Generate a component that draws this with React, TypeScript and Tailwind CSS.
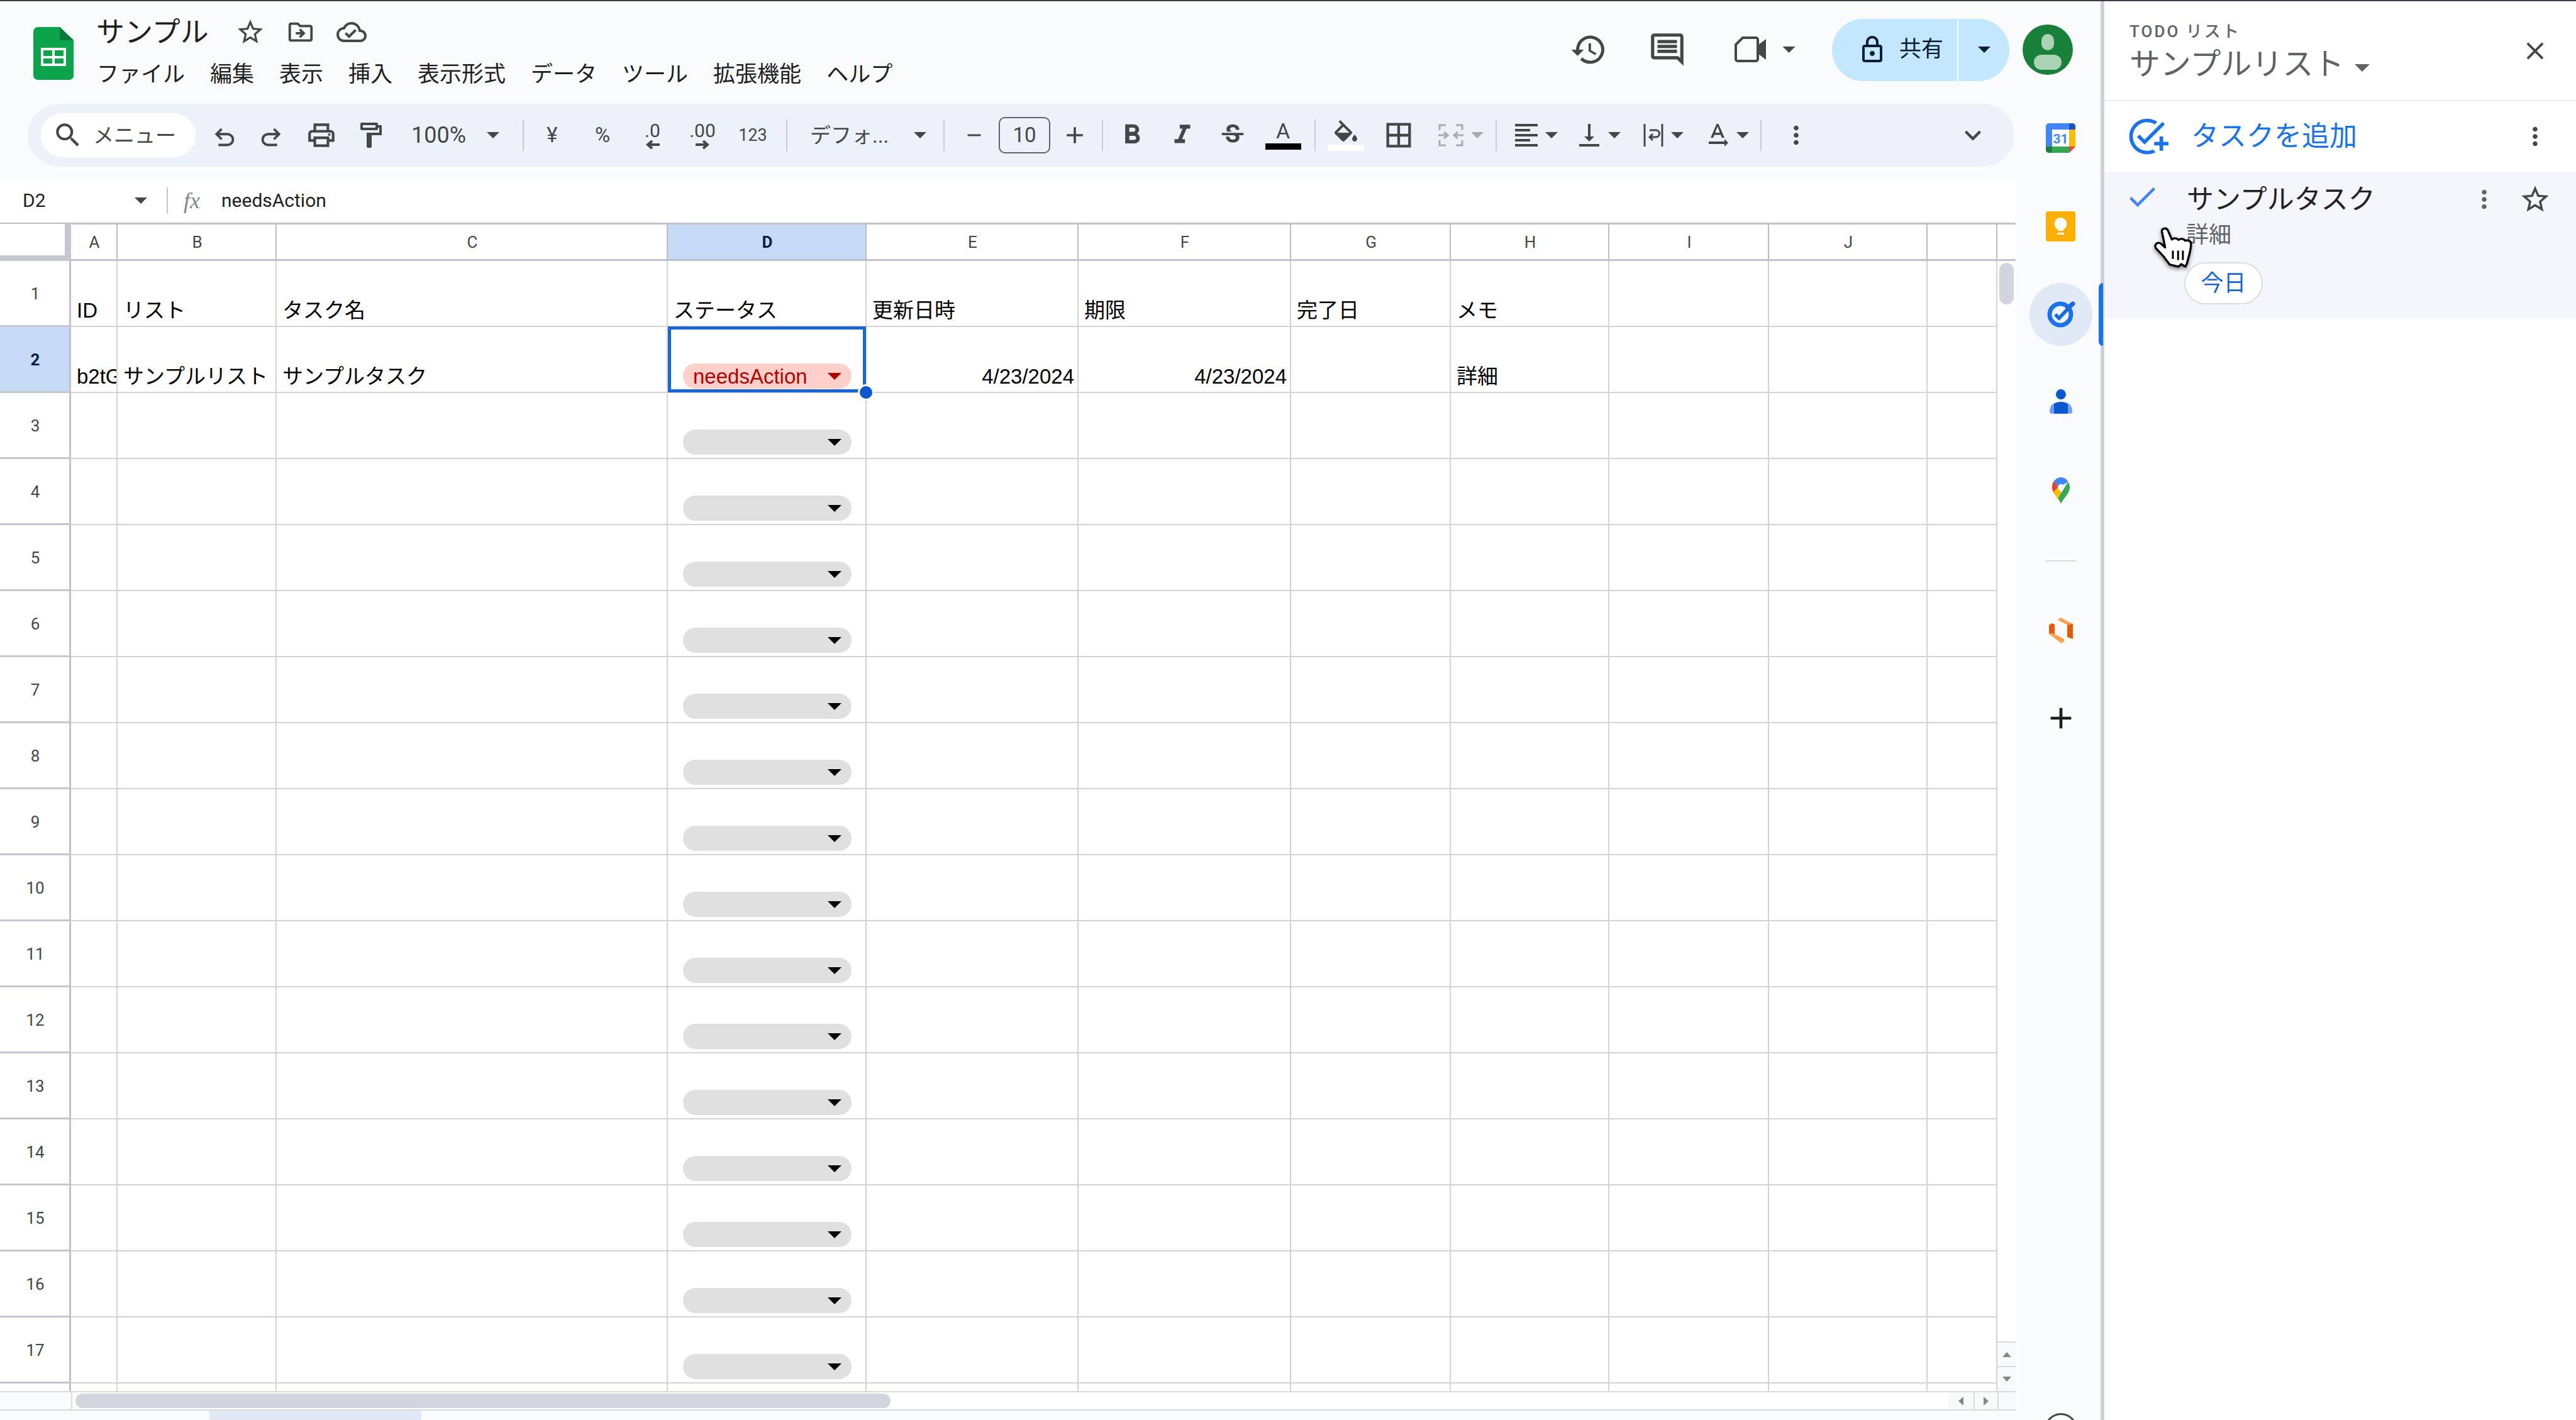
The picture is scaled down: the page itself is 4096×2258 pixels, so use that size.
import React from "react"
import {
  MdAdd,
  MdBorderAll,
  MdCheck,
  MdClose,
  MdFormatAlignLeft,
  MdFormatBold,
  MdFormatItalic,
  MdHistory,
  MdKeyboardArrowDown,
  MdMoreVert,
  MdOutlineAddTask,
  MdOutlineCloudDone,
  MdOutlineComment,
  MdOutlineDriveFileMove,
  MdOutlineFormatPaint,
  MdOutlineLock,
  MdOutlinePrint,
  MdRemove,
  MdSearch,
  MdStarBorder,
  MdStrikethroughS,
  MdTextRotationNone,
  MdVerticalAlignBottom,
} from "react-icons/md"

const Caret = ({ w = 20, h = 10, color = "#444746" }: { w?: number; h?: number; color?: string }) => (
  <svg width={w} height={h} viewBox="0 0 10 5" className="shrink-0">
    <path d="M0 0h10L5 5z" fill={color} />
  </svg>
)

const Sep = ({ className }: { className: string }) => (
  <div className={`h-[50px] w-[2px] shrink-0 bg-[#c7cbd4] ${className}`} />
)

const Slot = ({ className = "w-[78px]", children }: { className?: string; children: React.ReactNode }) => (
  <div className={`flex h-[70px] shrink-0 items-center justify-center ${className}`}>{children}</div>
)

const UndoIcon = ({ className }: { className?: string }) => (
  <svg width="46" height="46" viewBox="0 0 24 24" className={className}>
    <path
      d="M8 19v-2h7.1c1.05 0 1.96-.33 2.73-1 .78-.67 1.17-1.5 1.17-2.5S18.6 11.67 17.83 11c-.77-.67-1.68-1-2.73-1H8.8l2.6 2.6L10 14 5 9l5-5 1.4 1.4L8.8 8h6.3c1.62 0 3 .53 4.15 1.58C20.42 10.63 21 11.93 21 13.5s-.58 2.87-1.75 3.92C18.1 18.47 16.72 19 15.1 19z"
      fill="#444746"
    />
  </svg>
)

const SheetsLogo = () => (
  <svg width="64" height="84" viewBox="0 0 64 84" className="shrink-0">
    <path d="M7 0h35l22 21v56a7 7 0 0 1-7 7H7a7 7 0 0 1-7-7V7a7 7 0 0 1 7-7z" fill="#0ca44a" />
    <path d="M42 0l22 21H42z" fill="#0a7a38" />
    <rect x="12" y="33" width="40" height="29" fill="#fff" />
    <rect x="16" y="37" width="14" height="9" fill="#0ca44a" />
    <rect x="34" y="37" width="14" height="9" fill="#0ca44a" />
    <rect x="16" y="50" width="14" height="8" fill="#0ca44a" />
    <rect x="34" y="50" width="14" height="8" fill="#0ca44a" />
  </svg>
)

const Header = () => (
  <div className="flex h-[163px] w-[3340px] shrink-0 text-[#1f1f1f]">
    <div className="ml-[53px] mt-[41px]">
      <SheetsLogo />
    </div>
    <div className="ml-[36px] flex flex-col">
      <div className="mt-[22px] flex h-[54px] items-center">
        <span className="text-[45px] leading-none">サンプル</span>
        <MdStarBorder size={48} className="ml-[42px] text-[#444746]" />
        <MdOutlineDriveFileMove size={46} className="ml-[33px] text-[#444746]" />
        <MdOutlineCloudDone size={48} className="ml-[34px] text-[#444746]" />
      </div>
      <div className="mt-[19px] flex gap-[40px] text-[35px] leading-[44px]">
        <span className="ml-[1px]">ファイル</span>
        <span>編集</span>
        <span>表示</span>
        <span>挿入</span>
        <span>表示形式</span>
        <span>データ</span>
        <span>ツール</span>
        <span>拡張機能</span>
        <span>ヘルプ</span>
      </div>
    </div>
    <div className="ml-auto flex h-[154px] items-center pr-[44px] text-[#444746]">
      <MdHistory size={60} />
      <MdOutlineComment size={62} className="ml-[64px]" />
      <svg width="52" height="42" viewBox="0 0 52 42" className="ml-[76px]">
        <path
          d="M13 2h21a3 3 0 0 1 3 3v31a3 3 0 0 1-3 3H5a3 3 0 0 1-3-3V13z"
          fill="none"
          stroke="#444746"
          strokeWidth="4"
        />
        <path d="M37 14L50 4v33L37 27z" fill="#444746" />
      </svg>
      <div className="ml-[24px]">
        <Caret w={21} h={10} />
      </div>
      <div className="ml-[58px] flex h-[99px] w-[282px] items-center rounded-full bg-[#c2e7ff] text-[#001d35]">
        <MdOutlineLock size={48} className="ml-[40px] shrink-0" />
        <span className="ml-[19px] text-[35px]">共有</span>
        <div className="ml-[22px] h-[99px] w-[2px] bg-[#f9fbfd]" />
        <div className="ml-[31px]">
          <Caret w={20} h={10} color="#001d35" />
        </div>
      </div>
      <div className="relative ml-[21px] h-[80px] w-[80px] overflow-hidden rounded-full bg-[#188038]">
        <div className="mx-auto mt-[15px] h-[26px] w-[20px] rounded-full bg-[#a9d3b4]" />
        <div className="mx-auto mt-[7px] h-[24px] w-[44px] rounded-full bg-[#a9d3b4]" />
      </div>
    </div>
  </div>
)

const Toolbar = () => (
  <div className="ml-[44px] flex h-[100px] w-[3159px] shrink-0 items-center rounded-full bg-[#edf2fa] pl-[21px] text-[#444746]">
    <div className="flex h-[70px] w-[246px] shrink-0 items-center rounded-full bg-white">
      <MdSearch size={50} className="ml-[18px] shrink-0" />
      <span className="ml-[15px] text-[33px] leading-none">メニュー</span>
    </div>
    <Slot className="ml-[5px] w-[78px] pt-[8px]">
      <UndoIcon />
    </Slot>
    <Slot className="w-[78px] pt-[8px]">
      <UndoIcon className="-scale-x-100" />
    </Slot>
    <Slot>
      <MdOutlinePrint size={50} />
    </Slot>
    <Slot>
      <MdOutlineFormatPaint size={48} />
    </Slot>
    <div className="flex h-[70px] w-[194px] shrink-0 items-center">
      <span className="ml-[26px] text-[36px] leading-none">100%</span>
      <span className="ml-[33px]">
        <Caret w={20} h={10} />
      </span>
    </div>
    <Sep className="ml-[9px] mr-[5px]" />
    <Slot className="w-[80px]">
      <span className="text-[33px]">¥</span>
    </Slot>
    <Slot className="w-[80px]">
      <span className="text-[33px]">%</span>
    </Slot>
    <Slot className="w-[79px]">
      <span className="flex flex-col items-center text-[30px] leading-[30px]">
        <span>.0</span>
        <svg width="22" height="14" viewBox="0 0 22 14">
          <path d="M22 7H5M10 1L3 7l7 6" fill="none" stroke="#444746" strokeWidth="4" />
        </svg>
      </span>
    </Slot>
    <Slot className="w-[80px]">
      <span className="flex flex-col items-center text-[30px] leading-[30px]">
        <span>.00</span>
        <svg width="22" height="14" viewBox="0 0 22 14">
          <path d="M0 7h17M12 1l7 6-7 6" fill="none" stroke="#444746" strokeWidth="4" />
        </svg>
      </span>
    </Slot>
    <Slot className="w-[80px]">
      <span className="text-[27px]">123</span>
    </Slot>
    <Sep className="ml-[13px] mr-[11px]" />
    <div className="flex h-[70px] w-[232px] shrink-0 items-center">
      <span className="ml-[25px] text-[33px] leading-none">デフォ...</span>
      <span className="ml-[40px]">
        <Caret w={20} h={10} />
      </span>
    </div>
    <Sep className="ml-[5px] mr-[8px]" />
    <Slot>
      <MdRemove size={36} />
    </Slot>
    <div className="flex h-[58px] w-[82px] shrink-0 items-center justify-center rounded-[10px] border-2 border-[#5f6368] text-[33px]">
      10
    </div>
    <Slot className="w-[77px]">
      <MdAdd size={44} />
    </Slot>
    <Sep className="ml-[5px] mr-[6px]" />
    <Slot className="w-[80px]">
      <MdFormatBold size={52} />
    </Slot>
    <Slot className="w-[80px]">
      <MdFormatItalic size={50} />
    </Slot>
    <Slot className="w-[80px]">
      <MdStrikethroughS size={46} />
    </Slot>
    <Slot className="w-[80px]">
      <span className="flex flex-col items-center">
        <span className="text-[34px] leading-[30px]">A</span>
        <span className="mt-[5px] h-[10px] w-[57px] bg-black" />
      </span>
    </Slot>
    <Sep className="ml-[10px] mr-[8px]" />
    <Slot className="w-[80px]">
      <span className="flex flex-col items-center">
        <svg width="40" height="36" viewBox="2 0 20 18">
          <path
            d="M16.56 8.94 7.62 0 6.21 1.41l2.38 2.38-5.15 5.15c-.59.59-.59 1.54 0 2.12l5.5 5.5c.29.29.68.44 1.06.44s.77-.15 1.06-.44l5.5-5.5c.59-.58.59-1.53 0-2.12zM5.21 10 10 5.21 14.79 10H5.21zM19 11.5s-2 2.17-2 3.5c0 1.1.9 2 2 2s2-.9 2-2c0-1.33-2-3.5-2-3.5z"
            fill="#444746"
          />
        </svg>
        <span className="mt-[3px] h-[10px] w-[58px] bg-white" />
      </span>
    </Slot>
    <Slot className="ml-[4px] w-[80px]">
      <MdBorderAll size={52} />
    </Slot>
    <div className="flex h-[70px] w-[112px] shrink-0 items-center">
      <svg width="40" height="36" viewBox="0 0 40 36" className="ml-[23px]">
        <path
          d="M2 10V2h10M28 2h10v8M38 26v8H28M12 34H2v-8M0 18h14M9 13l6 5-6 5M40 18H26M31 13l-6 5 6 5"
          fill="none"
          stroke="#a8abb0"
          strokeWidth="3"
        />
      </svg>
      <span className="ml-[12px]">
        <Caret w={20} h={10} color="#a8abb0" />
      </span>
    </div>
    <Sep className="ml-[2px] mr-[15px]" />
    <div className="flex h-[70px] w-[100px] shrink-0 items-center">
      <MdFormatAlignLeft size={48} className="ml-[8px]" />
      <span className="ml-[6px]">
        <Caret w={20} h={10} />
      </span>
    </div>
    <div className="flex h-[70px] w-[102px] shrink-0 items-center">
      <MdVerticalAlignBottom size={48} className="ml-[8px]" />
      <span className="ml-[6px]">
        <Caret w={20} h={10} />
      </span>
    </div>
    <div className="flex h-[70px] w-[102px] shrink-0 items-center">
      <svg width="32" height="36" viewBox="0 0 32 36" className="ml-[16px]">
        <path
          d="M2 0v36M30 0v36M10 10h10a5 5 0 0 1 0 11h-9M15 16l-5 5 5 5"
          fill="none"
          stroke="#444746"
          strokeWidth="3"
        />
      </svg>
      <span className="ml-[12px]">
        <Caret w={20} h={10} />
      </span>
    </div>
    <div className="flex h-[70px] w-[94px] shrink-0 items-center">
      <MdTextRotationNone size={48} className="ml-[8px]" />
      <span className="ml-[6px]">
        <Caret w={20} h={10} />
      </span>
    </div>
    <Sep className="ml-[6px] mr-0" />
    <Slot className="ml-[16px] w-[78px]">
      <MdMoreVert size={46} />
    </Slot>
    <div className="ml-auto mr-[40px]">
      <MdKeyboardArrowDown size={52} />
    </div>
  </div>
)

const FormulaBar = () => (
  <div className="mt-[18px] flex h-[71px] w-[3205px] shrink-0 items-center bg-white text-[#1f1f1f]">
    <span className="ml-[36px] w-[178px] text-[30px] leading-none">D2</span>
    <Caret w={20} h={10} />
    <div className="ml-[31px] h-[42px] w-[2px] bg-[#c7c7c7]" />
    <span className="ml-[25px] w-[35px] font-['Liberation_Serif',serif] text-[36px] italic leading-none text-[#80868b]">
      fx
    </span>
    <span className="ml-[25px] text-[30px] leading-none">needsAction</span>
  </div>
)

const colNames = ["A", "B", "C", "D", "E", "F", "G", "H", "I", "J", ""]

const rowData: Record<number, string[]> = {
  1: ["ID", "リスト", "タスク名", "ステータス", "更新日時", "期限", "完了日", "メモ"],
  2: ["b2tG", "サンプルリスト", "サンプルタスク", "needsAction", "4/23/2024", "4/23/2024", "", "詳細"],
}

const StatusPill = ({ value }: { value?: string }) => (
  <div
    className={`mb-[5px] ml-[24px] flex h-[40px] w-[268px] items-center justify-between rounded-full pl-[16px] pr-[16px] text-[33px] ${
      value ? "bg-[#ffcfc9] text-[#b10202]" : "bg-[#e0e0e0]"
    }`}
  >
    <span className="font-['Liberation_Sans',sans-serif] leading-none">{value}</span>
    <Caret w={22} h={11} color={value ? "#b10202" : "#000000"} />
  </div>
)

const Cell = ({ row, col }: { row: number; col: number }) => {
  const text = rowData[row]?.[col]
  const isStatus = col === 3 && row >= 2
  const isDate = row === 2 && (col === 4 || col === 5)
  return (
    <div className="relative flex items-end border-b-2 border-r-2 border-[#d4d4d4] font-['Liberation_Sans','Noto_Sans_CJK_JP',sans-serif] text-[33px] leading-[38px] text-black">
      {isStatus ? (
        <StatusPill value={text} />
      ) : (
        <span
          className={`block w-full overflow-hidden whitespace-nowrap pb-[5px] pl-[9px] ${
            isDate ? "pr-[5px] text-right" : ""
          }`}
        >
          {text}
        </span>
      )}
      {row === 2 && col === 3 && (
        <div className="absolute -top-[1px] left-0 -right-[1px] -bottom-[1px] z-10 border-[5px] border-[#1a66d2]">
          <div className="absolute -bottom-[18px] -right-[18px] h-[26px] w-[26px] rounded-full border-[3px] border-white bg-[#0b57d0]" />
        </div>
      )}
    </div>
  )
}

const Grid = () => (
  <div className="grid h-[1858px] w-[3176px] shrink-0 grid-cols-[113px_74px_253px_622px_316px_337px_338px_254px_252px_254px_252px_111px] grid-rows-[61px_repeat(17,105px)_12px] overflow-hidden bg-white">
    <div className="border-y-2 border-t-[#b8bcc8] border-b-0 border-r-[10px] border-r-[#c4c7d0]">
      <div className="h-[50px]" />
      <div className="-mr-[10px] h-[9px] bg-[#c4c7d0]" />
    </div>
    {colNames.map((c) => (
      <div
        key={c}
        className={`flex items-center justify-center border-y-[3px] border-r-2 border-y-[#bfc2cc] border-r-[#bdbdbd] pl-[2px] pt-[1px] text-[26px] ${
          c === "D" ? "bg-[#c6d9f5] font-bold text-[#041e49]" : "text-[#444746]"
        }`}
      >
        {c}
      </div>
    ))}
    {Array.from({ length: 17 }, (_, i) => i + 1).map((r) => (
      <React.Fragment key={r}>
        <div
          className={`flex items-center justify-center border-b-[3px] border-r-[3px] border-b-[#c4c7d0] border-r-[#bfc2cc] pl-[2px] pt-[2px] text-[26px] ${
            r === 2 ? "bg-[#c6d9f5] font-bold text-[#041e49]" : "text-[#444746]"
          }`}
        >
          {r}
        </div>
        {colNames.map((_, c) => (
          <Cell key={c} row={r} col={c} />
        ))}
      </React.Fragment>
    ))}
    <div className="border-r-[3px] border-r-[#bfc2cc]" />
    {colNames.map((c) => (
      <div key={c} className="border-r-2 border-[#d4d4d4]" />
    ))}
  </div>
)

const VScroll = () => (
  <div className="flex w-[29px] shrink-0 flex-col">
    <div className="h-[61px] border-y-[3px] border-[#bfc2cc]" />
    <div className="mx-[3px] mt-[3px] h-[66px] rounded-full bg-[#d3d5de]" />
    <div className="flex-1" />
    <div className="flex h-[39px] items-center justify-center border-t-2 border-[#dadada] bg-[#f8f9fa]">
      <svg width="14" height="8" viewBox="0 0 14 8">
        <path d="M0 8L7 0l7 8z" fill="#80868b" />
      </svg>
    </div>
    <div className="flex h-[40px] items-center justify-center border-t-2 border-[#dadada] bg-[#f8f9fa]">
      <svg width="14" height="8" viewBox="0 0 14 8">
        <path d="M0 0l7 8 7-8z" fill="#80868b" />
      </svg>
    </div>
  </div>
)

const BottomBar = () => (
  <>
    <div className="flex h-[31px] w-[3205px] shrink-0 border-y-2 border-[#dadada] bg-white">
      <div className="w-[115px] shrink-0 border-r-2 border-[#dadada] bg-[#f9fbfd]" />
      <div className="ml-[5px] mt-[2px] h-[23px] w-[1296px] rounded-full bg-[#d3d5de]" />
      <div className="flex-1" />
      <div className="flex w-[40px] items-center justify-center bg-[#f8f9fa]">
        <svg width="8" height="14" viewBox="0 0 8 14">
          <path d="M8 0L0 7l8 7z" fill="#80868b" />
        </svg>
      </div>
      <div className="flex w-[38px] items-center justify-center border-l-2 border-[#dadada] bg-[#f8f9fa]">
        <svg width="8" height="14" viewBox="0 0 8 14">
          <path d="M0 0l8 7-8 7z" fill="#80868b" />
        </svg>
      </div>
      <div className="w-[29px] border-l-2 border-[#dadada] bg-[#f8f9fa]" />
    </div>
    <div className="flex-1">
      <div className="ml-[333px] h-full w-[337px] bg-[#e1e9f7]" />
    </div>
  </>
)

const CalendarIcon = () => (
  <svg width="47" height="47" viewBox="0 0 47 47">
    <path d="M5 0h37a5 5 0 0 1 5 5v32L37 47H5a5 5 0 0 1-5-5V5a5 5 0 0 1 5-5z" fill="#4285f4" />
    <path d="M37 0h5a5 5 0 0 1 5 5v5H37z" fill="#1a56c0" />
    <rect x="37" y="10" width="10" height="27" fill="#fbbc04" />
    <path d="M10 37h27v10H10z" fill="#34a853" />
    <path d="M0 37h10v10H5a5 5 0 0 1-5-5z" fill="#188038" />
    <path d="M37 37h10L37 47z" fill="#ea4335" />
    <rect x="10" y="10" width="27" height="27" fill="#fff" />
    <text x="23.5" y="31.5" textAnchor="middle" fontSize="21" fontWeight="700" fill="#4285f4">
      31
    </text>
  </svg>
)

const KeepIcon = () => (
  <svg width="47" height="48" viewBox="0 0 47 48">
    <rect width="47" height="48" rx="4" fill="#fbb003" />
    <circle cx="23.5" cy="20" r="10" fill="#fff" />
    <rect x="19" y="26" width="9" height="5" fill="#fff" />
    <rect x="18" y="34" width="11" height="3" fill="#fff" />
  </svg>
)

const TasksIcon = () => (
  <svg width="46" height="46" viewBox="0 0 46 46" className="ml-[3px]">
    <circle cx="21" cy="23" r="17" fill="#f0f5fd" stroke="#1a73e8" strokeWidth="7" />
    <path d="M13 23l6 6L36 11" fill="none" stroke="#1a6be0" strokeWidth="5.5" />
    <path d="M33 13l8-7" stroke="#1a6be0" strokeWidth="7" strokeLinecap="round" />
  </svg>
)

const ContactsIcon = () => (
  <svg width="36" height="40" viewBox="0 0 36 32" preserveAspectRatio="none">
    <ellipse cx="18" cy="6.5" rx="8" ry="6.5" fill="#0b57d0" />
    <path d="M0 28c0-9 8-12 18-12s18 3 18 12c0 2-1 3-3 3H3c-2 0-3-1-3-3z" fill="#6f9df5" />
    <path d="M7 31V19c3-2 7-3 11-3s8 1 11 3v12z" fill="#0b57d0" />
  </svg>
)

const MapsIcon = () => (
  <svg width="30" height="42" viewBox="0 0 32 34" preserveAspectRatio="none">
    <path d="M16 34C12 27 1 21 1 13c0-3 1-6 3-8l12 13z" fill="#fbbc04" />
    <path d="M4 5l7 8-8 6C2 17 1 15 1 13c0-3 1-6 3-8z" fill="#ea4335" />
    <path d="M4 5C7 2 11 0 16 0c5 0 10 2 12 6L11 13z" fill="#4285f4" />
    <path d="M28 6c2 2 3 5 3 7 0 8-11 14-15 21-1-2-3-5-5-7z" fill="#34a853" />
    <ellipse cx="16" cy="13" rx="5" ry="4.5" fill="#fff" />
  </svg>
)

const OfficeIcon = () => (
  <svg width="38" height="42" viewBox="0 0 38 42">
    <path d="M14 4l4-4 20 10-4 4z" fill="#ffa04d" />
    <path d="M29 12l5-1 4-1v24l-9-3z" fill="#e65a06" />
    <path d="M0 12l5-3 4 2v19l-9-4z" fill="#e65a06" />
    <path d="M0 26l4-2 20 10v4l-4 3z" fill="#ffa04d" />
  </svg>
)

const SideStrip = () => (
  <div className="flex w-[135px] shrink-0 flex-col items-center pl-[8px] pt-[194px]">
    <div className="flex h-[47px] shrink-0 items-center justify-center">
      <CalendarIcon />
    </div>
    <div className="mt-[93px] shrink-0">
      <KeepIcon />
    </div>
    <div className="relative mt-[66px] flex h-[100px] w-[100px] shrink-0 items-center justify-center rounded-full bg-[#e1e9f7]">
      <TasksIcon />
      <div className="absolute -right-[17px] top-0 z-10 h-[100px] w-[7px] rounded-l-full bg-[#1a73e8]" />
    </div>
    <div className="mt-[69px] shrink-0">
      <ContactsIcon />
    </div>
    <div className="mt-[100px] shrink-0">
      <MapsIcon />
    </div>
    <div className="mt-[90px] h-[2px] w-[50px] shrink-0 bg-[#dadce0]" />
    <div className="mt-[89px] shrink-0">
      <OfficeIcon />
    </div>
    <MdAdd size={56} className="mt-[90px] shrink-0 text-[#1f1f1f]" />
    <div className="mt-[1077px] h-[52px] w-[52px] shrink-0 rounded-full border-[3px] border-[#444746]" />
  </div>
)

const HandCursor = () => (
  <svg
    width="70"
    height="73"
    viewBox="60 50 210 220"
    className="absolute left-[3420px] top-[355px] drop-shadow-[0_3px_3px_rgba(0,0,0,0.45)]"
  >
    <path
      d="M112 82C112 68 135 62 142 80L160 122C170 112 185 115 192 124C202 116 218 118 224 128C236 122 252 130 252 142C252 175 240 205 232 238L225 252L205 240L192 252L150 242L122 205L85 165C72 150 90 130 108 142L128 160Z"
      fill="#fff"
      stroke="#000"
      strokeWidth="10"
      strokeLinejoin="round"
    />
    <path d="M165 175v40M190 175v45M213 175v45" stroke="#000" strokeWidth="9" />
  </svg>
)

const TasksPanel = () => (
  <div className="flex flex-1 flex-col border-l-[6px] border-[#cdd0d6] bg-white">
    <div className="relative flex h-[159px] shrink-0 flex-col border-b-2 border-[#eceef1] pl-[40px]">
      <span className="mt-[35px] text-[26px] font-medium leading-[26px] tracking-[3px] text-[#5f6368]">
        TODO リスト
      </span>
      <div className="mt-[12px] flex items-center">
        <span className="text-[49px] leading-[56px] text-[#5f6368]">サンプルリスト</span>
        <span className="ml-[16px] mt-[10px]">
          <Caret w={24} h={12} color="#5f6368" />
        </span>
      </div>
      <MdClose size={46} className="absolute right-[42px] top-[56px] text-[#444746]" />
    </div>
    <div className="flex h-[112px] shrink-0 items-center pl-[34px] pr-[42px]">
      <MdOutlineAddTask size={68} className="text-[#1a73e8]" />
      <span className="ml-[36px] text-[44px] leading-none text-[#1a73e8]">タスクを追加</span>
      <MdMoreVert size={46} className="ml-auto text-[#444746]" />
    </div>
    <div className="flex h-[234px] shrink-0 flex-col bg-[#f4f6fb]">
      <div className="flex items-center pl-[32px] pr-[42px] pt-[16px]">
        <MdCheck size={56} className="-mt-[8px] text-[#4285f4]" />
        <span className="ml-[43px] text-[43px] leading-[56px] text-[#202124]">サンプルタスク</span>
        <MdMoreVert size={46} className="ml-auto mr-[32px] text-[#5f6368]" />
        <MdStarBorder size={52} className="-mr-[3px] text-[#444746]" />
      </div>
      <span className="ml-[130px] mt-[7px] text-[36px] leading-[44px] text-[#5f6368]">詳細</span>
      <div className="ml-[127px] mt-[21px] flex h-[67px] w-[125px] items-center justify-center rounded-full border-2 border-[#dadce0] bg-white text-[36px] text-[#1967d2]">
        今日
      </div>
    </div>
  </div>
)

export default function App() {
  return (
    <div className="relative flex h-[2258px] w-[4096px] overflow-hidden border-t-2 border-[#3c3c4a] bg-[#f9fbfd] font-['Roboto','Noto_Sans_CJK_JP',sans-serif]">
      <div className="flex w-[3205px] shrink-0 flex-col">
        <Header />
        <Toolbar />
        <FormulaBar />
        <div className="flex shrink-0 bg-white">
          <Grid />
          <VScroll />
        </div>
        <BottomBar />
      </div>
      <SideStrip />
      <TasksPanel />
      <HandCursor />
    </div>
  )
}
